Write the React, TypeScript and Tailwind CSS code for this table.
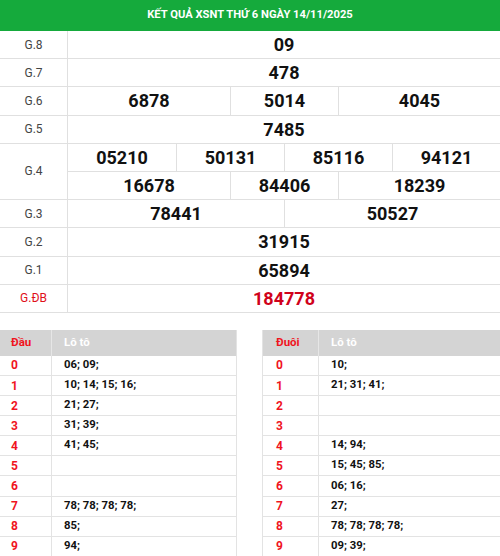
const prizes: { label: string; nums: string[]; spans: number[]; special?: boolean }[] = [
  { label: 'G.8', nums: ['09'], spans: [8] },
  { label: 'G.7', nums: ['478'], spans: [8] },
  { label: 'G.6', nums: ['6878', '5014', '4045'], spans: [3, 2, 3] },
  { label: 'G.5', nums: ['7485'], spans: [8] },
];

const tailPrizes: { label: string; nums: string[]; spans: number[]; special?: boolean }[] = [
  { label: 'G.3', nums: ['78441', '50527'], spans: [4, 4] },
  { label: 'G.2', nums: ['31915'], spans: [8] },
  { label: 'G.1', nums: ['65894'], spans: [8] },
  { label: 'G.ĐB', nums: ['184778'], spans: [8], special: true },
];

const spanClass: Record<number, string> = {
  2: 'col-span-2',
  3: 'col-span-3',
  4: 'col-span-4',
  8: 'col-span-8',
};

const dau = ['06; 09;', '10; 14; 15; 16;', '21; 27;', '31; 39;', '41; 45;', '', '', '78; 78; 78; 78;', '85;', '94;'];
const duoi = ['10;', '21; 31; 41;', '', '', '14; 94;', '15; 45; 85;', '06; 16;', '27;', '78; 78; 78; 78;', '09; 39;'];

function NumberCells({ nums, spans, special }: { nums: string[]; spans: number[]; special?: boolean }) {
  return (
    <div className="grid flex-1 grid-cols-8">
      {nums.map((n, i) => (
        <div
          key={i}
          className={`${spanClass[spans[i]]} flex items-center justify-center text-[18px] font-bold ${
            i > 0 ? 'border-l border-[#e0e0e0]' : ''
          } ${special ? 'text-[#d0021b]' : 'text-[#111]'}`}
        >
          {n}
        </div>
      ))}
    </div>
  );
}

function PrizeRow({ label, nums, spans, special }: { label: string; nums: string[]; spans: number[]; special?: boolean }) {
  return (
    <div className="flex h-[28.2px] border-b border-[#e0e0e0]">
      <div
        className={`flex w-[68px] shrink-0 items-center justify-center border-r border-[#e0e0e0] text-[12px] ${
          special ? 'text-[#e0101a]' : 'text-[#444]'
        }`}
      >
        {label}
      </div>
      <NumberCells nums={nums} spans={spans} special={special} />
    </div>
  );
}

function LotoTable({ title, rows, firstCol, className }: { title: string; rows: string[]; firstCol: string; className: string }) {
  return (
    <div className={className}>
      <div className="flex h-[26px] bg-[#d4d4d4] text-[11.5px] font-bold">
        <div className={`${firstCol} flex items-center border-r border-[#e6e6e6] text-[#f0141e]`}>{title}</div>
        <div className="flex flex-1 items-center pl-[12px] text-white">Lô tô</div>
      </div>
      {rows.map((r, i) => (
        <div key={i} className="flex h-[20.1px] border-b border-[#e3e3e3] text-[11.3px] font-bold">
          <div className={`${firstCol} flex items-center border-r border-[#e3e3e3] text-[12px] text-[#f0141e]`}>{i}</div>
          <div className="flex flex-1 items-center pl-[12px] text-[#111]">{r}</div>
        </div>
      ))}
    </div>
  );
}

export default function App() {
  return (
    <div className="w-[500px] h-[556px] overflow-hidden bg-white" style={{ fontFamily: 'Roboto, "Liberation Sans", sans-serif' }}>
      <div className="flex h-[31px] items-center justify-center bg-[#15aa3c] text-[11.2px] font-bold text-white">
        KẾT QUẢ XSNT THỨ 6 NGÀY 14/11/2025
      </div>

      <div>
        {prizes.map((p) => (
          <PrizeRow key={p.label} {...p} />
        ))}
        <div className="flex border-b border-[#e0e0e0]">
          <div className="flex w-[68px] shrink-0 items-center justify-center border-r border-[#e0e0e0] text-[12px] text-[#444]">
            G.4
          </div>
          <div className="flex flex-1 flex-col">
            <div className="flex h-[28.2px] border-b border-[#e0e0e0]">
              <NumberCells nums={['05210', '50131', '85116', '94121']} spans={[2, 2, 2, 2]} />
            </div>
            <div className="flex h-[27.2px]">
              <NumberCells nums={['16678', '84406', '18239']} spans={[3, 2, 3]} />
            </div>
          </div>
        </div>
        {tailPrizes.map((p) => (
          <PrizeRow key={p.label} {...p} />
        ))}
      </div>

      <div className="mt-[17px] flex justify-between">
        <LotoTable title="Đầu" rows={dau} firstCol="w-[52px] pl-[11px]" className="w-[237px] border-r border-[#e3e3e3]" />
        <LotoTable title="Đuôi" rows={duoi} firstCol="w-[56px] pl-[13px]" className="w-[238px] border-l border-[#e3e3e3]" />
      </div>
    </div>
  );
}
